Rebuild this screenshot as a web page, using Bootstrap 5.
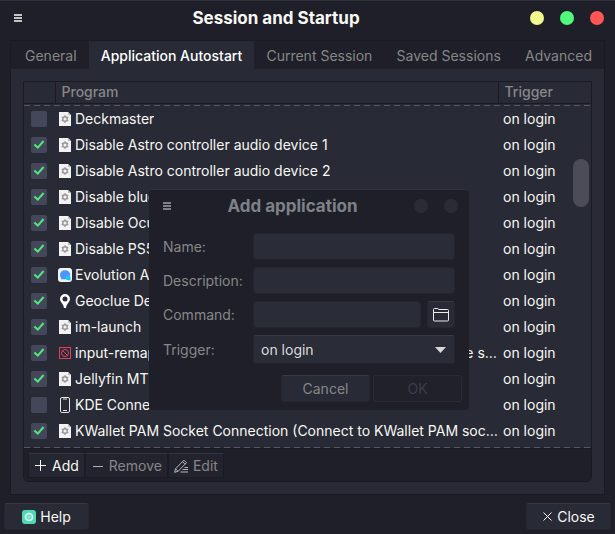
<!DOCTYPE html>
<html lang="en">
<head>
<meta charset="utf-8">
<meta name="viewport" content="width=device-width, initial-scale=1">
<title>Session and Startup</title>
<link href="https://cdn.jsdelivr.net/npm/bootstrap@5.3.0/dist/css/bootstrap.min.css" rel="stylesheet">
<style>
:root{--deep:#1e1f29;--pane:#282a36;--line:#191a23;--dim:#878787;--ink:#f8f8f2}
body{font-family:Inter,"Liberation Sans",sans-serif;font-size:14px;line-height:20px;color:var(--ink);background:var(--deep)}
.win{border-top:1px solid #30313c}
.titlebar{height:39px;padding:0 11px 6px 13px}
.win-title{font-size:17px;line-height:20px;font-weight:700;margin:0}
.menu-btn{width:9px;height:9px;padding:0;border:0;background:none;color:#c4c4c4;line-height:0;display:block}
.dots{gap:16px}
.dot{width:14px;height:14px;border:0;border-radius:50%;padding:0}
.dot-y{background:#f1fa8c}.dot-g{background:#50fa7b}.dot-r{background:#ff5555}.dot-off{background:#292b36}
.book{margin:0 10px;border:1px solid var(--line);background:var(--pane)}
.book .nav-tabs{border:0;background:var(--deep);flex-wrap:nowrap;padding-left:2px}
.book .nav-link{border:0;border-radius:0;margin:0;padding:5px 12px 3px;height:28px;color:var(--dim);font-weight:400;white-space:nowrap}
.book .nav-link.active{background:var(--pane);color:#fff;font-weight:500}
.pane-body{padding:12px}
.frame{border:1px solid var(--line);border-radius:0 0 5px 5px;overflow:hidden}
.grid-table{table-layout:fixed;width:100%;margin:0}
.grid-table th{height:21px;padding:0 6px;line-height:20px;font-weight:500;color:var(--dim);border-right:1px solid var(--line);border-bottom:1px solid var(--line)}
.grid-table th:last-child{border-right:0}
.grid-table td{height:26px;padding:0 5px;line-height:20px;vertical-align:middle}
.grid-table tr>:nth-child(1){width:31px}
.grid-table tr>:nth-child(3){width:93px}
.grid-table td:first-child{padding:0 7px}
.grid-table td:nth-child(2){padding:0 0 0 3px}
.dash{height:1px;background:repeating-linear-gradient(90deg,#555764 0 6px,transparent 6px 10px)}
.grid-table .dash-cell:first-child{height:2px;padding:1px 0 0;line-height:0}
.tick.form-check-input{display:block;width:16px;height:16px;margin:0;border:0;border-radius:2px;background-color:#44475a;box-shadow:none}
.tick.form-check-input:checked{background-color:#44475a;background-size:16px 16px;background-image:url("data:image/svg+xml,%3Csvg xmlns='http://www.w3.org/2000/svg' viewBox='0 0 16 16'%3E%3Cpath d='M3.4 7.4 6.8 10.6 12.6 4' fill='none' stroke='%2350e67b' stroke-width='2'/%3E%3C/svg%3E")}
.app-icon{width:14px;height:16px;margin-right:3px;flex:none}
.thumb{top:77px;right:2px;width:16px;height:48px;border-radius:8px;background:#4b4c57}
.toolbar{background:var(--deep);padding:4px;height:33px;border-top:1px solid var(--line)}
.flat{line-height:20px;padding:1px 5px;height:25px;border:1px solid #1a1b24;border-top-color:#34353f;border-radius:0;background:#22232e;color:var(--dim);white-space:nowrap;gap:5px}
.flat svg{flex:none}
.flat-on{background:#242631;color:var(--ink)}
.push{line-height:20px;height:27px;padding:2px 10px;border:1px solid #252631;border-top-color:#383943;border-radius:3px;background:#282a35;color:var(--ink)}
.push-foot{width:85px}
.footer-bar{padding:8px 4px 4px}
.dlg{left:149px;top:188px;width:320px;background:var(--deep);border-top:1px solid #30313c;border-radius:3px;z-index:5}
.dlg .titlebar{height:39px;padding-bottom:7px}
.dlg .win-title,.dlg .menu-btn{color:#7d8287}
.dlg-body{padding:4px 14px 8px 14px}
.fields{grid-template-columns:83px 1fr;column-gap:7px;row-gap:7px}
.fields label{color:var(--dim)}
.entry.form-control,.entry.form-select{height:27px;padding:2px 7px;font-size:14px;line-height:20px;border:1px solid #242530;border-radius:3px;background-color:#2a2c38;color:#dcdcdc}
.entry.form-select{height:29px;border-top-color:#393a45;background-size:11px 6px;background-position:right 8px center;background-image:url("data:image/svg+xml,%3Csvg xmlns='http://www.w3.org/2000/svg' viewBox='0 0 11 6'%3E%3Cpath d='M0 0H11L5.5 6Z' fill='%23d8d8d8'/%3E%3C/svg%3E")}
.cmd-row{gap:6px}
.browse{width:28px;padding:0}
.dlg-btn{width:89px}
.actions{gap:3px;margin:11px -7px 0 0}
.dlg .cancel{color:var(--dim)}
.dlg .ok:disabled{background:#20212b;border-color:#2a2b36;color:#3c3d4b;opacity:1}
</style>
<script src="https://cdn.jsdelivr.net/npm/bootstrap@5.3.0/dist/js/bootstrap.bundle.min.js"></script>
</head>
<body>
<svg class="d-none" aria-hidden="true">
  <symbol id="i-menu" viewBox="0 0 8 8"><path d="M0 0H8V2H0ZM0 3H8V5H0ZM0 6H8V8H0Z" fill="currentColor"/></symbol>
  <symbol id="i-exec" viewBox="0 0 14 16"><path d="M1 1H10L13 4V15H1Z" fill="#f2f2f2"/><path d="M10 1 13 4H10Z" fill="#b9b9b9"/><circle cx="7" cy="8" r="2.2" fill="none" stroke="#999" stroke-width="1.4"/><path d="M7 4.3V5.800M7 10.200V11.700M3.800 6.100 5 6.900M9 9.100 10.200 9.900M3.800 9.900 5 9.100M9 6.900 10.200 6.100" stroke="#999" stroke-width="1.5"/></symbol>
  <symbol id="i-chat" viewBox="0 0 14 16"><rect x="0" y="1" width="14" height="14" rx="3" fill="#f4f6f8"/><path d="M7 3.200C4 3.200 2 5.200 2 7.700C2 9.300 2.700 10.300 3 11V12.200H7C10 12.200 12.200 10.200 12.200 7.700S10 3.200 7 3.200Z" fill="#4c94ff"/><path d="M12.500 13.200H9.800A2.500 2.500 0 1 1 12.500 10.500Z" fill="#19c5fb"/></symbol>
  <symbol id="i-pin" viewBox="0 0 14 16"><path fill-rule="evenodd" d="M7 1A5 5 0 0 0 2 6C2 9 5.500 10.500 6 15H8C8.500 10.500 12 9 12 6A5 5 0 0 0 7 1ZM7 3.500A2.500 2.500 0 1 1 7 8.500A2.500 2.500 0 1 1 7 3.500Z" fill="#fff"/></symbol>
  <symbol id="i-block" viewBox="0 0 14 16"><g fill="none" stroke="#e0405a"><rect x="1.500" y="2.500" width="11" height="11"/><circle cx="7" cy="8" r="3.500"/><path d="M4.500 5.500 9.500 10.500"/></g></symbol>
  <symbol id="i-phone" viewBox="0 0 14 16"><rect x="2.500" y=".5" width="9" height="15" rx="1.500" fill="none" stroke="#e4e4e4"/><path d="M5 2H9M5 13.500H9" stroke="#e4e4e4"/></symbol>
</svg>

<div class="win position-relative d-flex flex-column min-vh-100">
  <header class="titlebar d-flex align-items-center justify-content-between">
    <button type="button" class="menu-btn" aria-label="Window menu"><svg width="8" height="8"><use href="#i-menu"/></svg></button>
    <h1 class="win-title">Session and Startup</h1>
    <div class="dots d-flex">
      <button type="button" class="dot dot-y" aria-label="Minimize"></button>
      <button type="button" class="dot dot-g" aria-label="Maximize"></button>
      <button type="button" class="dot dot-r" aria-label="Close window"></button>
    </div>
  </header>

  <main class="book flex-grow-1 d-flex flex-column">
    <div class="nav nav-tabs justify-content-between" role="tablist">
      <button type="button" class="nav-link" role="tab">General</button>
      <button type="button" class="nav-link active" role="tab" aria-selected="true">Application Autostart</button>
      <button type="button" class="nav-link" role="tab">Current Session</button>
      <button type="button" class="nav-link" role="tab">Saved Sessions</button>
      <button type="button" class="nav-link" role="tab">Advanced</button>
    </div>
    <div class="pane-body flex-grow-1 d-flex flex-column">
      <div class="frame position-relative flex-grow-1 d-flex flex-column">
        <table class="grid-table">
          <thead>
            <tr><th aria-label="Enabled"></th><th>Program</th><th>Trigger</th></tr>
          </thead>
          <tbody>
            <tr><td class="dash-cell" colspan="3"><div class="dash"></div></td></tr>
            <tr><td><input type="checkbox" class="form-check-input tick" id="p1"></td><td><div class="d-flex align-items-center"><svg class="app-icon"><use href="#i-exec"/></svg><label class="text-truncate" for="p1">Deckmaster</label></div></td><td>on login</td></tr>
            <tr><td><input type="checkbox" class="form-check-input tick" id="p2" checked></td><td><div class="d-flex align-items-center"><svg class="app-icon"><use href="#i-exec"/></svg><label class="text-truncate" for="p2">Disable Astro controller audio device 1</label></div></td><td>on login</td></tr>
            <tr><td><input type="checkbox" class="form-check-input tick" id="p3" checked></td><td><div class="d-flex align-items-center"><svg class="app-icon"><use href="#i-exec"/></svg><label class="text-truncate" for="p3">Disable Astro controller audio device 2</label></div></td><td>on login</td></tr>
            <tr><td><input type="checkbox" class="form-check-input tick" id="p4" checked></td><td><div class="d-flex align-items-center"><svg class="app-icon"><use href="#i-exec"/></svg><label class="text-truncate" for="p4">Disable blue</label></div></td><td>on login</td></tr>
            <tr><td><input type="checkbox" class="form-check-input tick" id="p5" checked></td><td><div class="d-flex align-items-center"><svg class="app-icon"><use href="#i-exec"/></svg><label class="text-truncate" for="p5">Disable Ocu</label></div></td><td>on login</td></tr>
            <tr><td><input type="checkbox" class="form-check-input tick" id="p6" checked></td><td><div class="d-flex align-items-center"><svg class="app-icon"><use href="#i-exec"/></svg><label class="text-truncate" for="p6">Disable PS5</label></div></td><td>on login</td></tr>
            <tr><td><input type="checkbox" class="form-check-input tick" id="p7" checked></td><td><div class="d-flex align-items-center"><svg class="app-icon"><use href="#i-chat"/></svg><label class="text-truncate" for="p7">Evolution Al</label></div></td><td>on login</td></tr>
            <tr><td><input type="checkbox" class="form-check-input tick" id="p8" checked></td><td><div class="d-flex align-items-center"><svg class="app-icon"><use href="#i-pin"/></svg><label class="text-truncate" for="p8">Geoclue De</label></div></td><td>on login</td></tr>
            <tr><td><input type="checkbox" class="form-check-input tick" id="p9" checked></td><td><div class="d-flex align-items-center"><svg class="app-icon"><use href="#i-exec"/></svg><label class="text-truncate" for="p9">im-launch</label></div></td><td>on login</td></tr>
            <tr><td><input type="checkbox" class="form-check-input tick" id="p10" checked></td><td><div class="d-flex align-items-center"><svg class="app-icon"><use href="#i-block"/></svg><label class="text-truncate" for="p10">input-remapper-autoload (Load all of the presets, before the session)</label></div></td><td>on login</td></tr>
            <tr><td><input type="checkbox" class="form-check-input tick" id="p11" checked></td><td><div class="d-flex align-items-center"><svg class="app-icon"><use href="#i-exec"/></svg><label class="text-truncate" for="p11">Jellyfin MT1</label></div></td><td>on login</td></tr>
            <tr><td><input type="checkbox" class="form-check-input tick" id="p12"></td><td><div class="d-flex align-items-center"><svg class="app-icon"><use href="#i-phone"/></svg><label class="text-truncate" for="p12">KDE Conne</label></div></td><td>on login</td></tr>
            <tr><td><input type="checkbox" class="form-check-input tick" id="p13" checked></td><td><div class="d-flex align-items-center"><svg class="app-icon"><use href="#i-exec"/></svg><label class="text-truncate" for="p13">KWallet PAM Socket Connection (Connect to KWallet PAM socket)</label></div></td><td>on login</td></tr>
          </tbody>
        </table>
        <div class="thumb position-absolute"></div>
        <div class="mt-auto">
          <div class="dash"></div>
          <div class="toolbar d-flex">
            <button type="button" class="flat flat-on d-flex align-items-center"><svg width="13" height="13" viewBox="0 0 13 13"><path d="M6.500 1V12M1 6.500H12" stroke="#f8f8f2"/></svg>Add</button>
            <button type="button" class="flat d-flex align-items-center" disabled><svg width="13" height="13" viewBox="0 0 13 13"><path d="M2 7.500H12" stroke="#b0b0b0"/></svg>Remove</button>
            <button type="button" class="flat d-flex align-items-center" disabled><svg width="14" height="14" viewBox="0 0 14 14" fill="none" stroke="#b8b8b8"><path d="M.7 13.300 1.500 9.800 10 1.200 12.500 3.700 4 12.300ZM8.500 2.700 11 5.200M1.500 9.800 4 12.300M10.500 8.500H14M8.500 10.500H14M6.500 13H14"/></svg>Edit</button>
          </div>
        </div>
      </div>
    </div>
  </main>

  <footer class="footer-bar d-flex justify-content-between">
    <button type="button" class="push push-foot d-flex align-items-center justify-content-center gap-1"><svg width="14" height="14" viewBox="0 0 14 14"><rect width="14" height="14" rx="3" fill="#4fd8b5"/><circle cx="7" cy="7" r="3.500" fill="none" stroke="#e4fff7" stroke-width="1.700"/><path d="M7 4.500V9.500M4.500 7H9.500" stroke="#a5f0dc"/></svg>Help</button>
    <button type="button" class="push push-foot d-flex align-items-center justify-content-center gap-1"><svg width="11" height="11" viewBox="0 0 11 11"><path d="M1.500 1.500 9.500 9.500M9.500 1.500 1.500 9.500" stroke="#f8f8f2"/></svg>Close</button>
  </footer>

  <section class="dlg position-absolute" role="dialog" aria-labelledby="dlg-title">
    <div class="titlebar d-flex align-items-center justify-content-between">
      <button type="button" class="menu-btn" aria-label="Dialog menu"><svg width="8" height="8"><use href="#i-menu"/></svg></button>
      <h2 class="win-title" id="dlg-title">Add application</h2>
      <div class="dots d-flex">
        <button type="button" class="dot dot-off" aria-label="Maximize dialog"></button>
        <button type="button" class="dot dot-off" aria-label="Close dialog"></button>
      </div>
    </div>
    <form class="dlg-body">
      <div class="fields d-grid align-items-center">
        <label for="f-name">Name:</label><input id="f-name" type="text" class="form-control entry">
        <label for="f-desc">Description:</label><input id="f-desc" type="text" class="form-control entry">
        <label for="f-cmd">Command:</label>
        <div class="cmd-row d-flex"><input id="f-cmd" type="text" class="form-control entry"><button type="button" class="push browse flex-shrink-0 d-flex align-items-center justify-content-center" aria-label="Browse"><svg width="16" height="14" viewBox="0 0 16 14" fill="none" stroke="#ececec"><path d="M.5 12V1.500Q.5.500 1.500.500H4.500L6 1.500H14.500Q15.500 1.500 15.500 2.500V12Q15.500 13 14.500 13H1.500Q.5 13 .5 12ZM.5 4.500H15.500"/></svg></button></div>
        <label for="f-trig">Trigger:</label><select id="f-trig" class="form-select entry"><option>on login</option><option>on logout</option></select>
      </div>
      <div class="actions d-flex justify-content-end">
        <button type="button" class="push dlg-btn cancel">Cancel</button>
        <button type="submit" class="push dlg-btn ok" disabled>OK</button>
      </div>
    </form>
  </section>
</div>
</body>
</html>
